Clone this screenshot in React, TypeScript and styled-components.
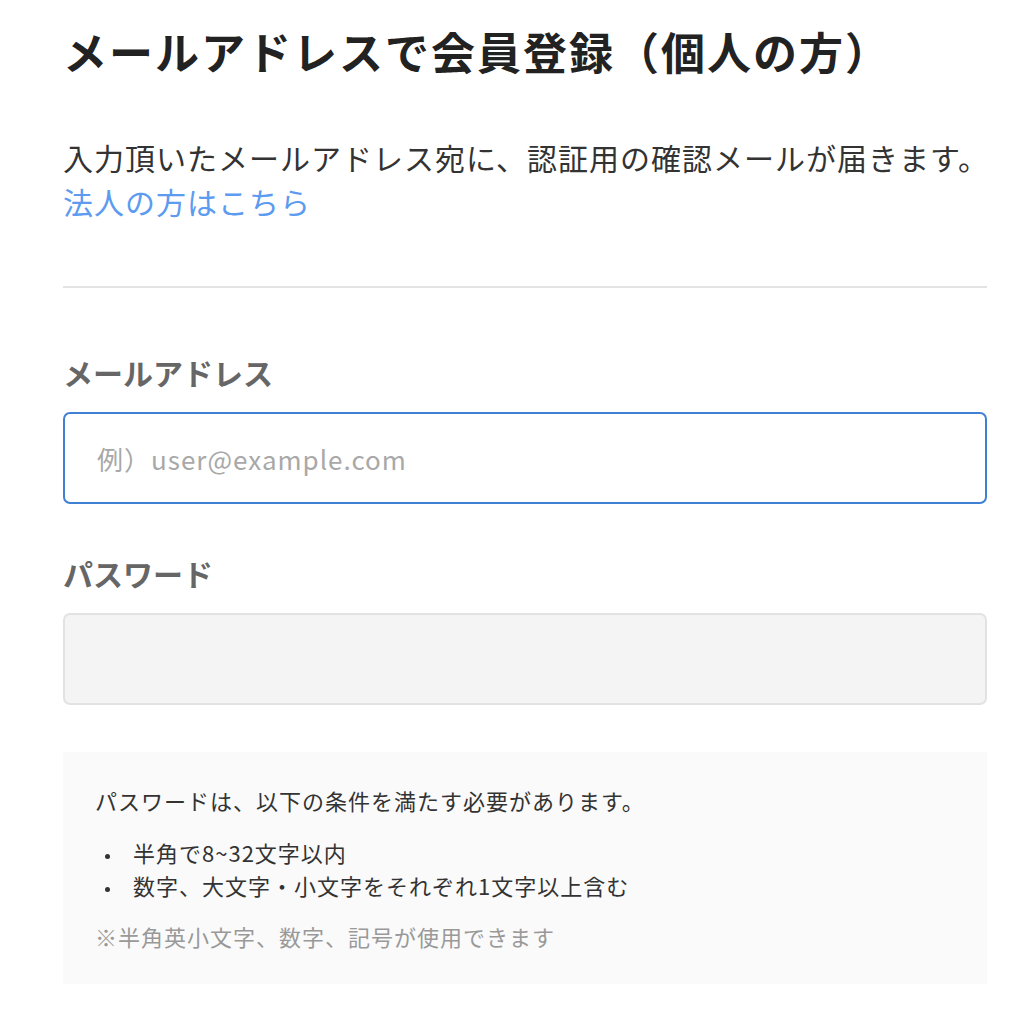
import React, { useState } from 'react';
import styled, { createGlobalStyle } from 'styled-components';

const GlobalStyle = createGlobalStyle`
  body {
    margin: 0;
    background: #fff;
    font-family: 'Noto Sans CJK JP', 'Noto Sans', sans-serif;
    color: #333;
  }
  * {
    box-sizing: border-box;
  }
`;

const rules = ['半角で8~32文字以内', '数字、大文字・小文字をそれぞれ1文字以上含む'];

const App = () => {
  const [email, setEmail] = useState('');
  const [password, setPassword] = useState('');

  return (
    <>
      <GlobalStyle />
      <Page>
        <Title>メールアドレスで会員登録（個人の方）</Title>
        <Lead>
          入力頂いたメールアドレス宛に、認証用の確認メールが届きます。
          <br />
          <CorpLink href='#'>法人の方はこちら</CorpLink>
        </Lead>
        <Divider />
        <Field>
          <Label htmlFor='email'>メールアドレス</Label>
          <Input
            id='email'
            type='email'
            placeholder='例）user@example.com'
            value={email}
            onChange={(e) => setEmail(e.target.value)}
            $active
          />
        </Field>
        <Field>
          <Label htmlFor='password'>パスワード</Label>
          <Input
            id='password'
            type='password'
            value={password}
            onChange={(e) => setPassword(e.target.value)}
          />
        </Field>
        <Notice>
          <NoticeText>パスワードは、以下の条件を満たす必要があります。</NoticeText>
          <RuleList>
            {rules.map((rule) => (
              <RuleItem key={rule}>{rule}</RuleItem>
            ))}
          </RuleList>
          <NoticeNote>※半角英小文字、数字、記号が使用できます</NoticeNote>
        </Notice>
      </Page>
    </>
  );
};

export default App;

const Page = styled.main`
  display: flex;
  flex-direction: column;
  width: 924px;
  margin-left: 63px;
  padding-top: 20px;
`;

const Title = styled.h1`
  margin: 0;
  font-size: 44px;
  line-height: 62px;
  font-weight: 700;
  letter-spacing: 2px;
  color: #222;
`;

const Lead = styled.p`
  margin: 54px 0 0;
  font-size: 30px;
  line-height: 43.5px;
  letter-spacing: 1px;
  color: #333;
  white-space: nowrap;
`;

const CorpLink = styled.a`
  color: #5c9bef;
  text-decoration: none;
`;

const Divider = styled.hr`
  margin: 63px 0 0;
  border: none;
  height: 2px;
  background: #e3e3e3;
`;

const Field = styled.div`
  display: flex;
  flex-direction: column;
  gap: 18px;
  margin-top: 63px;
  & + & {
    margin-top: 48px;
  }
`;

const Label = styled.label`
  font-size: 30px;
  line-height: 43px;
  font-weight: 700;
  color: #666;
`;

const Input = styled.input<{ $active?: boolean }>`
  width: 100%;
  height: 92px;
  padding: 0 32px;
  border: 2px solid ${({ $active }) => ($active ? '#3f80d4' : '#e2e2e2')};
  border-radius: 7px;
  background: ${({ $active }) => ($active ? '#fff' : '#f4f4f4')};
  font-family: 'Noto Sans CJK JP', 'Noto Sans', sans-serif;
  font-size: 26px;
  letter-spacing: 1px;
  color: #333;
  outline: none;
  &::placeholder {
    color: #a8a8a8;
  }
`;

const Notice = styled.section`
  margin-top: 47px;
  padding: 32px 32px 31px;
  background: #fafafa;
  font-size: 22px;
  line-height: 33px;
  letter-spacing: 1px;
  color: #333;
`;

const NoticeText = styled.p`
  margin: 0;
`;

const RuleList = styled.ul`
  margin: 19px 0 0;
  padding: 0;
  list-style: none;
`;

const RuleItem = styled.li`
  position: relative;
  padding-left: 38px;
  &::before {
    content: '';
    position: absolute;
    left: 10px;
    top: 18px;
    width: 5px;
    height: 5px;
    border-radius: 50%;
    background: #333;
  }
`;

const NoticeNote = styled.p`
  margin: 18px 0 0;
  color: #999;
`;
